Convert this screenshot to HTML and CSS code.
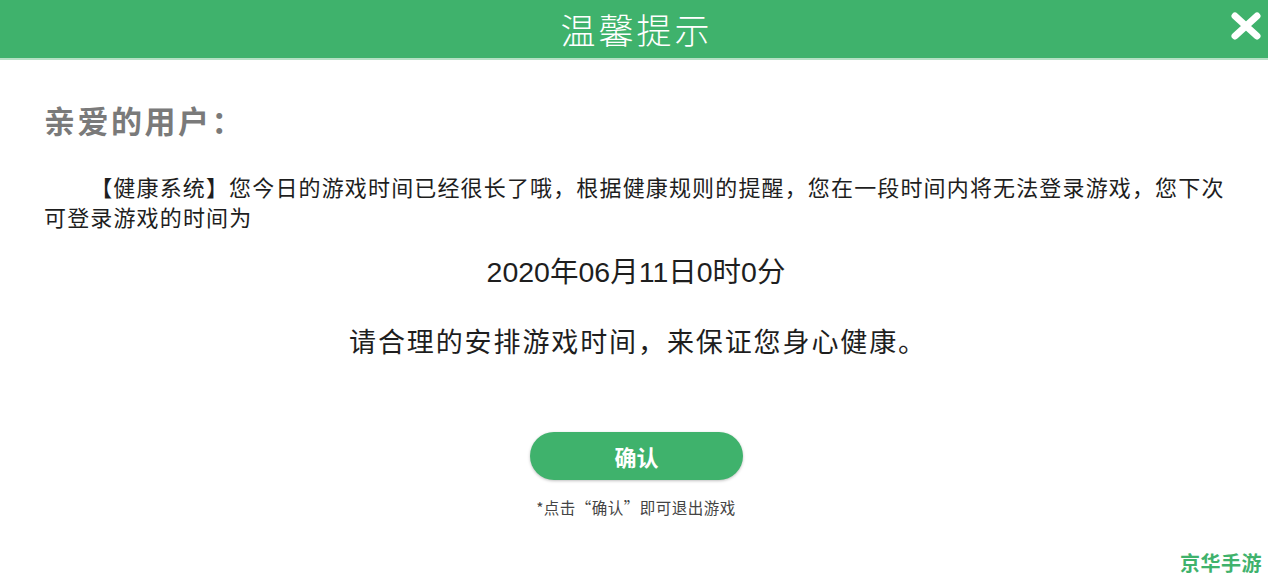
FILE: index.html
```html
<!DOCTYPE html>
<html lang="zh">
<head>
<meta charset="utf-8">
<link rel="stylesheet" href="styles.css">
</head>
<body>
<div class="dialog">
  <header class="top">
    <h1 class="title">温馨提示</h1>
    <span class="close" aria-label="关闭">
      <svg width="32" height="28" viewBox="0 0 32 28"><path d="M5 4 L27 24 M27 4 L5 24" stroke="#fff" stroke-width="7" stroke-linecap="round"/></svg>
    </span>
  </header>
  <main class="body">
    <h2 class="greet">亲爱的用户：</h2>
    <p class="para">【健康系统】您今日的游戏时间已经很长了哦，根据健康规则的提醒，您在一段时间内将无法登录游戏，您下次可登录游戏的时间为</p>
    <p class="date">2020年06月11日0时0分</p>
    <p class="slogan">请合理的安排游戏时间，来保证您身心健康。</p>
    <div class="actions">
      <button class="btn">确认</button>
      <p class="note">*点击“确认”即可退出游戏</p>
    </div>
  </main>
  <div class="mark">京华手游</div>
</div>
</body>
</html>
```
FILE: styles.css
```css
* { box-sizing: border-box; }
html, body { margin: 0; padding: 0; background: #fff; }
body {
  width: 1268px;
  height: 585px;
  overflow: hidden;
  font-family: "Noto Sans CJK SC", "Noto Sans", sans-serif;
  color: #1e1e1e;
}
.dialog { position: relative; width: 1268px; height: 585px; }
.top {
  position: relative;
  height: 60px;
  background: #3fb26c;
  border-bottom: 2px solid #b5e0c4;
  display: flex;
  align-items: center;
  justify-content: center;
}
.title {
  margin: 0;
  font-size: 35px;
  font-weight: 300;
  color: #fff;
  letter-spacing: 3px;
  line-height: 58px;
  padding-left: 5px;
}
.close {
  position: absolute;
  right: 6px;
  top: 12px;
  display: block;
}
.body { padding: 0 44px; }
.greet {
  margin: 40px 0 0;
  font-size: 31px;
  line-height: 40px;
  font-weight: 700;
  color: #7a7a7a;
  letter-spacing: 2.5px;
}
.para {
  margin: 31px -10px 0 0;
  font-size: 22px;
  line-height: 30px;
  letter-spacing: 1.15px;
  text-indent: 2.1em;
}
.date {
  margin: 21px 0 0;
  text-align: center;
  font-family: "Liberation Sans", "Noto Sans CJK SC", sans-serif;
  font-size: 28.5px;
  line-height: 40px;
  padding-left: 4px;
}
.slogan {
  margin: 29px 0 0;
  text-align: center;
  font-size: 27px;
  line-height: 40px;
  letter-spacing: 1.9px;
  padding-left: 8px;
}
.actions {
  display: flex;
  flex-direction: column;
  align-items: center;
  margin-top: 71px;
  padding-left: 2px;
}
.btn {
  width: 213px;
  height: 48px;
  border: 0;
  border-radius: 24px;
  background: #3fb26c;
  color: #fff;
  font-family: inherit;
  font-size: 22px;
  font-weight: 700;
  box-shadow: 0 1px 3px rgba(0,0,0,0.25);
  padding: 0;
  margin-left: 3px;
}
.note {
  margin: 17px 0 0;
  font-size: 15.5px;
  line-height: 20px;
  color: #444;
  letter-spacing: 0.5px;
  padding-left: 2px;
}
.mark {
  position: absolute;
  right: 6px;
  bottom: 8px;
  font-size: 20px;
  font-weight: 700;
  color: #3fb26c;
  letter-spacing: 0.5px;
}
```
